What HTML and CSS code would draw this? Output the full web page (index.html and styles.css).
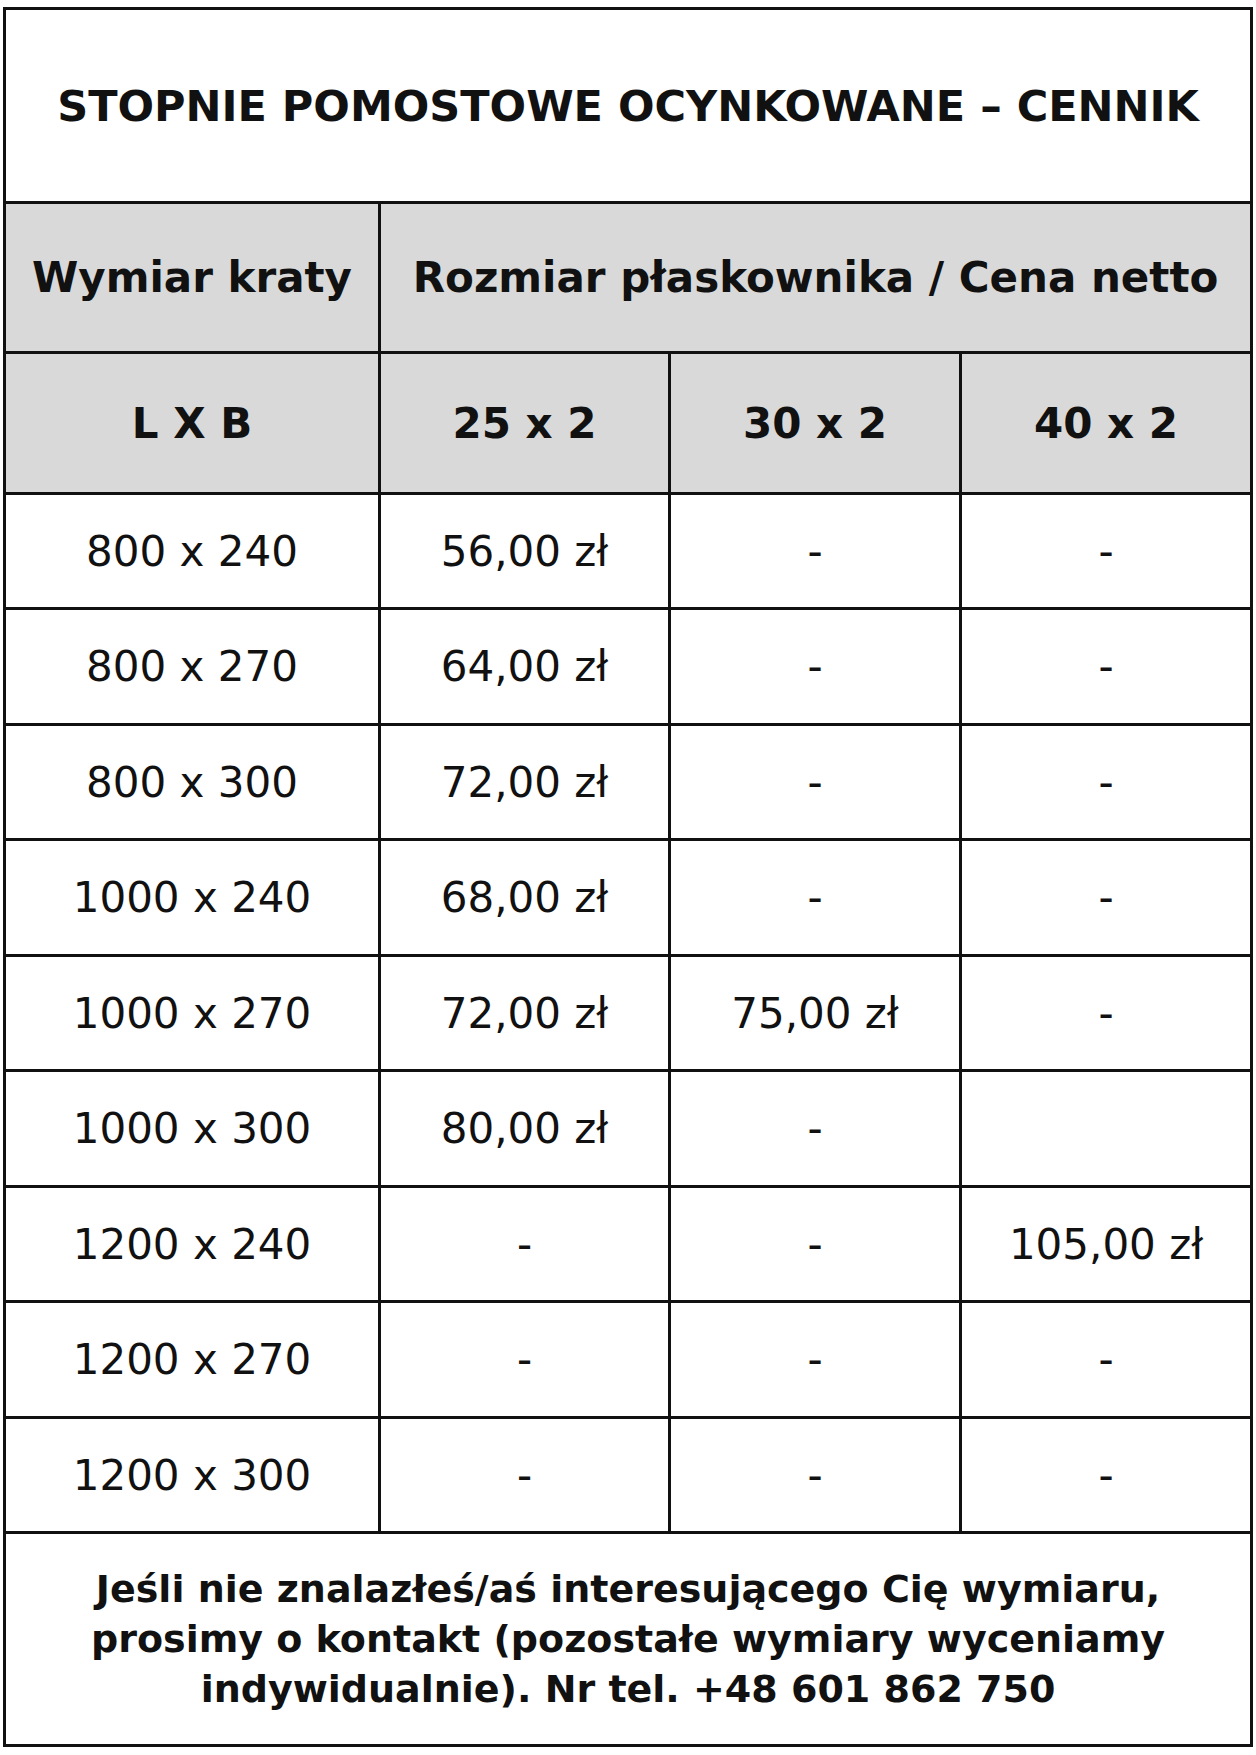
FILE: index.html
```html
<!DOCTYPE html>
<html lang="pl">
<head>
<meta charset="utf-8">
<title>Stopnie pomostowe ocynkowane – cennik</title>
<link rel="stylesheet" href="styles.css">
</head>
<body>
<div class="page">
  <table class="price-table">
    <colgroup>
      <col class="c1"><col class="c2"><col class="c3"><col class="c4">
    </colgroup>
    <thead>
      <tr class="row-title">
        <th colspan="4" class="title">STOPNIE POMOSTOWE OCYNKOWANE – CENNIK</th>
      </tr>
      <tr class="row-head1">
        <th class="head">Wymiar kraty</th>
        <th colspan="3" class="head">Rozmiar płaskownika / Cena netto</th>
      </tr>
      <tr class="row-head2">
        <th class="head">L X B</th>
        <th class="head">25 x 2</th>
        <th class="head">30 x 2</th>
        <th class="head">40 x 2</th>
      </tr>
    </thead>
    <tbody>
      <tr><td>800 x 240</td><td>56,00 zł</td><td>-</td><td>-</td></tr>
      <tr><td>800 x 270</td><td>64,00 zł</td><td>-</td><td>-</td></tr>
      <tr><td>800 x 300</td><td>72,00 zł</td><td>-</td><td>-</td></tr>
      <tr><td>1000 x 240</td><td>68,00 zł</td><td>-</td><td>-</td></tr>
      <tr><td>1000 x 270</td><td>72,00 zł</td><td>75,00 zł</td><td>-</td></tr>
      <tr><td>1000 x 300</td><td>80,00 zł</td><td>-</td><td></td></tr>
      <tr><td>1200 x 240</td><td>-</td><td>-</td><td>105,00 zł</td></tr>
      <tr><td>1200 x 270</td><td>-</td><td>-</td><td>-</td></tr>
      <tr><td>1200 x 300</td><td>-</td><td>-</td><td>-</td></tr>
    </tbody>
    <tfoot>
      <tr class="row-foot">
        <td colspan="4" class="note">Jeśli nie znalazłeś/aś interesującego Cię wymiaru,<br>prosimy o kontakt (pozostałe wymiary wyceniamy<br>indywidualnie). Nr tel. +48 601 862 750</td>
      </tr>
    </tfoot>
  </table>
</div>
</body>
</html>
```
FILE: styles.css
```css
html, body {
  margin: 0;
  padding: 0;
  background: #ffffff;
}

body {
  font-family: "DejaVu Sans", "Noto Sans", sans-serif;
  color: #111111;
}

.page {
  padding: 7px 0 0 3px;
}

.price-table {
  width: 1250px;
  table-layout: fixed;
  border-collapse: separate;
  border-spacing: 0;
  border-top: 3px solid #111;
  border-left: 3px solid #111;
}

.c1 { width: 375px; }
.c2 { width: 290px; }
.c3 { width: 291px; }
.c4 { width: 291px; }

.price-table th,
.price-table td {
  box-sizing: border-box;
  padding: 0;
  border-right: 3px solid #111;
  border-bottom: 3px solid #111;
  text-align: center;
  vertical-align: middle;
  white-space: nowrap;
}

.price-table td {
  font-size: 42px;
  font-weight: 400;
}

.title {
  height: 194px;
  font-size: 43px;
  font-weight: 700;
  background: #ffffff;
}

.head {
  font-size: 42px;
  font-weight: 700;
  background: #d9d9d9;
}

.row-head1 .head { height: 150px; }
.row-head2 .head { height: 141px; }

tbody tr:nth-child(odd) td { height: 115px; }
tbody tr:nth-child(even) td { height: 116px; }

.price-table .note {
  height: 213px;
  font-size: 38px;
  font-weight: 700;
  line-height: 50px;
}
```
